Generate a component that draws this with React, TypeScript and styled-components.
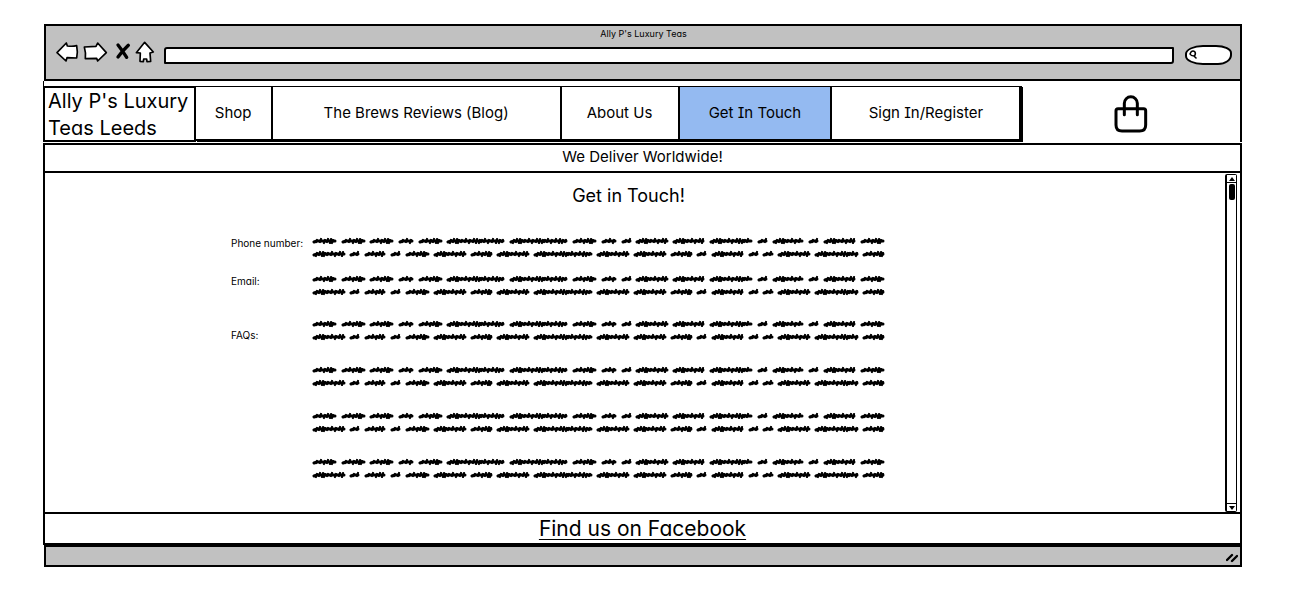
import React from "react";
import styled, { createGlobalStyle } from "styled-components";

const GlobalStyle = createGlobalStyle`
  *, *::before, *::after { box-sizing: border-box; }
  body {
    margin: 0;
    background: #fff;
    color: #000;
    font-family: Inter, "Liberation Sans", sans-serif;
    font-feature-settings: "cv08", "cv11";
  }
  a { color: inherit; text-decoration: none; }
`;

const Page = styled.div`
  padding: 24px 66px 40px 43px;
`;

const BrowserWindow = styled.div`
  display: flex;
  flex-direction: column;
`;

const ChromeBar = styled.div`
  background: #c1c1c1;
  border: 2px solid #000;
  margin-left: 1px;
  height: 57px;
  padding: 1px 8px 0 9px;
`;

const WindowTitle = styled.p`
  margin: 0;
  font-size: 9px;
  line-height: 14px;
  text-align: center;
`;

const Toolbar = styled.div`
  display: flex;
  align-items: center;
  height: 22px;
`;

const ToolButtons = styled.div`
  display: flex;
  gap: 4px;
  margin-right: 7px;
`;

const ToolButton = styled.button`
  display: block;
  padding: 0;
  border: 0;
  background: none;
  svg { display: block; overflow: visible; }
`;

const AddressInput = styled.input`
  flex: 1;
  min-width: 0;
  height: 17px;
  margin-top: 6px;
  padding: 0 6px;
  border: 2px solid #000;
  border-radius: 3px 1px 3px 1px;
  background: #fff;
  font: inherit;
  font-size: 10px;
  outline: none;
`;

const SearchBox = styled.label`
  display: flex;
  align-items: center;
  width: 47px;
  height: 20px;
  margin: 6px 0 0 11px;
  padding-left: 2px;
  border: 2px solid #000;
  border-radius: 18px 16px 14px 18px / 9px 8px 10px 9px;
  background: #fff;
  svg { flex: none; }
`;

const SearchInput = styled.input`
  flex: 1;
  min-width: 0;
  height: 12px;
  padding: 0 2px;
  border: 0;
  background: none;
  font: inherit;
  font-size: 9px;
  outline: none;
`;

const SiteHeader = styled.header`
  display: grid;
  grid-template-columns: minmax(0, 152fr) minmax(0, 828fr) minmax(0, 218fr);
  padding-top: 5px;
  border-left: 1px solid #000;
  border-right: 2px solid #000;
`;

const Brand = styled.a`
  height: 56px;
  padding-left: 3px;
  border: 2px solid #000;
  border-left-width: 1px;
  font-size: 20px;
  line-height: 27px;
  white-space: nowrap;
`;

const Nav = styled.nav`
  display: grid;
  grid-template-columns: 77fr 289fr 118fr 153fr 190fr;
  height: 55px;
  border-top: 1px solid #000;
  border-bottom: 2px solid #000;
  box-shadow: 1px 1px 0 #000;
`;

const NavLink = styled.a<{ $active?: boolean }>`
  display: flex;
  align-items: center;
  justify-content: center;
  padding-bottom: 1px;
  border-right: 2px solid #000;
  background: ${(p) => (p.$active ? "#94baf1" : "#fff")};
  font-size: 15px;
  white-space: nowrap;
  &:last-child { border-right-width: 3px; }
`;

const BasketArea = styled.div`
  display: flex;
  align-items: center;
  justify-content: center;
`;

const Strip = styled.div<{ $size: "small" | "large" }>`
  display: flex;
  align-items: center;
  justify-content: center;
  height: ${(p) => (p.$size === "large" ? 33 : 30)}px;
  margin-top: ${(p) => (p.$size === "large" ? 0 : 1)}px;
  padding-bottom: ${(p) => (p.$size === "large" ? 0 : 4)}px;
  border: 2px solid #000;
  font-size: ${(p) => (p.$size === "large" ? 21 : 15)}px;
  a { text-decoration: underline; text-decoration-thickness: 1px; text-underline-offset: 3px; }
`;

const Viewport = styled.div`
  display: flex;
  padding: 1px 3px 0 0;
  border-left: 2px solid #000;
  border-right: 2px solid #000;
`;

const Content = styled.main`
  flex: 1;
  min-width: 0;
  padding-bottom: 33px;
`;

const Heading = styled.h1`
  margin: 10px 13px 30px 0;
  font-size: 18px;
  font-weight: 400;
  line-height: 24px;
  text-align: center;
`;

const ContactList = styled.dl`
  display: grid;
  grid-template-columns: 82px minmax(0, 1fr);
  row-gap: 18px;
  margin: 0 0 0 186px;
`;

const Term = styled.dt<{ $low?: boolean }>`
  display: flex;
  align-items: ${(p) => (p.$low ? "flex-end" : "flex-start")};
  height: 20px;
  margin-top: ${(p) => (p.$low ? 7 : 0)}px;
  font-size: 10px;
  line-height: ${(p) => (p.$low ? 12 : 10)}px;
  white-space: nowrap;
`;

const Details = styled.dd<{ $low?: boolean }>`
  display: flex;
  flex-direction: column;
  gap: 26px;
  margin: ${(p) => (p.$low ? 7 : 0)}px 0 0;
  svg { display: block; max-width: 100%; overflow: visible; }
`;

const ScrollTrack = styled.div`
  display: flex;
  flex-direction: column;
  width: 12px;
  border: 1px solid #000;
  border-left-width: 2px;
  border-radius: 2px;
`;

const ScrollArrow = styled.button<{ $down?: boolean }>`
  display: flex;
  align-items: center;
  justify-content: center;
  height: 8px;
  margin-top: ${(p) => (p.$down ? "auto" : 0)};
  padding: 0;
  border: 0 solid #000;
  border-width: ${(p) => (p.$down ? "1px 0 0" : "0 0 1px")};
  background: #fff;
`;

const ScrollThumb = styled.div`
  width: 6px;
  height: 16px;
  margin: 1px auto 0;
  border-radius: 2px;
  background: #000;
`;

const StatusBar = styled.div`
  display: flex;
  align-items: center;
  justify-content: flex-end;
  height: 22px;
  margin-left: 1px;
  padding: 3px 2px 0 0;
  border: 2px solid #000;
  background: #c1c1c1;
`;

/* Start and length of every scribbled word, one array for each line. */
const SCRIBBLE_LINES: [number, number][][] = [
  [[0, 24], [29, 24], [57, 24], [86, 15], [106, 24], [134, 58], [197, 58], [260, 24], [289, 15], [309, 10], [323, 33], [360, 32], [397, 43], [445, 10], [460, 31], [496, 10], [511, 32], [548, 24]],
  [[0, 33], [37, 10], [52, 21], [78, 10], [93, 24], [121, 33], [158, 22], [184, 33], [221, 59], [284, 33], [321, 33], [358, 22], [384, 10], [399, 32], [436, 10], [450, 11], [465, 33], [502, 44], [550, 22]],
];

/* The short slanted ticks that cross a word. */
function ticks(start: number, length: number, y: number) {
  const end = start + length - 1;
  const top = [1, 2, 1, 2, 2, 1];
  const bottom = [1, 1, 2, 1, 2, 2];
  const steps = [4, 4, 3, 3, 2, 3, 4];
  let d = "";
  let x = start + 4;
  for (let i = length > 24 ? 2 : 0; x < end; i += 1) {
    d += `M${x - 1} ${y + bottom[i % bottom.length]}L${x} ${y - top[i % top.length]}`;
    x += steps[i % steps.length];
  }
  return d;
}

/* The heavy stroke through a word; it enters from slightly below. */
function core(start: number, length: number, y: number) {
  return `M${start + 1} ${y + 1}L${start + 4} ${y}H${start + length - 2}`;
}

function drawWords(draw: (start: number, length: number, y: number) => string) {
  return SCRIBBLE_LINES.map((line, i) =>
    line.map(([s, l]) => draw(s, l, i === 0 ? 3 : 16)).join("")
  ).join("");
}

const TICKS_PATH = drawWords(ticks);
const CORE_PATH = drawWords(core);

const Scribble = () => (
  <svg width="572" height="20" viewBox="0 0 572 20" aria-hidden="true">
    <g fill="none" stroke="#000" strokeLinecap="round" strokeLinejoin="round">
      <path d={CORE_PATH} strokeWidth="3" />
      <path d={TICKS_PATH} strokeWidth="2.2" />
    </g>
  </svg>
);

const tools = [
  { label: "Back", x: 72, w: 25, d: "M78 112L106 83L109 92Q124 94 137 91L139 110L137 128L108 127L105 137Z" },
  { label: "Forward", x: 162, w: 25, d: "M163 95L198 93L203 83L229 112L203 137L200 129L166 130Q168 112 163 95Z" },
  { label: "Stop", x: 249, w: 20, heavy: true, d: "M264 89Q276 104 290 126M295 90Q278 106 264 125" },
  { label: "Home", x: 321, w: 20, d: "M344 81L370 110L360 113L362 138L351 139L350 131L341 131L340 139L330 138L331 113L319 112Z" },
];

const navItems = [
  { label: "Shop" },
  { label: "The Brews Reviews (Blog)" },
  { label: "About Us" },
  { label: "Get In Touch", active: true },
  { label: "Sign In/Register" },
];

export default function App() {
  return (
    <Page>
      <GlobalStyle />
      <BrowserWindow>
        <ChromeBar>
          <WindowTitle>Ally P's Luxury Teas</WindowTitle>
          <Toolbar>
            <ToolButtons>
              {tools.map((t) => (
                <ToolButton key={t.label} type="button" aria-label={t.label}>
                  <svg width={t.w} height="22" viewBox={`${t.x} 77 ${t.w * 3} 66`}>
                    <path
                      d={t.d}
                      fill={t.heavy ? "none" : "#fff"}
                      stroke="#000"
                      strokeWidth={t.heavy ? 10 : 5}
                      strokeLinejoin="round"
                      strokeLinecap="round"
                    />
                  </svg>
                </ToolButton>
              ))}
            </ToolButtons>
            <AddressInput type="text" aria-label="Address" />
            <SearchBox>
              <svg width="9" height="10" viewBox="0 0 9 10" aria-hidden="true">
                <path d="M2 2Q4 0 6 2Q7 5 5 6Q2 6 1 4ZM5 6L7 8" fill="none" stroke="#000" strokeWidth="1.6" strokeLinecap="round" strokeLinejoin="round" />
              </svg>
              <SearchInput type="text" aria-label="Search" />
            </SearchBox>
          </Toolbar>
        </ChromeBar>

        <SiteHeader>
          <Brand href="#home">
            Ally P's Luxury
            <br />
            Teas Leeds
          </Brand>
          <Nav aria-label="Main">
            {navItems.map((n) => (
              <NavLink key={n.label} href="#" $active={n.active}>
                {n.label}
              </NavLink>
            ))}
          </Nav>
          <BasketArea>
            <a href="#basket" aria-label="Basket">
              <svg width="34" height="38" viewBox="316 240 102 114" style={{ display: "block" }}>
                <path
                  d="M322 287Q322 281 328 281H405Q411 281 411 287V330Q411 348 393 348H340Q322 348 322 330ZM347 299V265A19.500 19.500 0 0 1 386 265V299"
                  fill="none"
                  stroke="#000"
                  strokeWidth="9"
                  strokeLinecap="round"
                />
              </svg>
            </a>
          </BasketArea>
        </SiteHeader>

        <Strip $size="small">We Deliver Worldwide!</Strip>

        <Viewport>
          <Content>
            <Heading>Get in Touch!</Heading>
            <ContactList>
              <Term>Phone number:</Term>
              <Details><Scribble /></Details>
              <Term>Email:</Term>
              <Details><Scribble /></Details>
              <Term $low>FAQs:</Term>
              <Details $low>
                <Scribble />
                <Scribble />
                <Scribble />
                <Scribble />
              </Details>
            </ContactList>
          </Content>
          <ScrollTrack>
            <ScrollArrow type="button" aria-label="Scroll up">
              <svg width="6" height="4" viewBox="0 0 6 4"><path d="M3 0L6 4H0Z" /></svg>
            </ScrollArrow>
            <ScrollThumb />
            <ScrollArrow type="button" aria-label="Scroll down" $down>
              <svg width="6" height="4" viewBox="0 0 6 4"><path d="M0 0H6L3 4Z" /></svg>
            </ScrollArrow>
          </ScrollTrack>
        </Viewport>

        <Strip as="footer" $size="large">
          <a href="#facebook">Find us on Facebook</a>
        </Strip>
        <StatusBar>
          <svg width="12" height="10" viewBox="0 0 12 10" aria-hidden="true">
            <path d="M1 7L6 2M6 8L11 3" stroke="#000" strokeWidth="2.400" strokeLinecap="round" />
          </svg>
        </StatusBar>
      </BrowserWindow>
    </Page>
  );
}
